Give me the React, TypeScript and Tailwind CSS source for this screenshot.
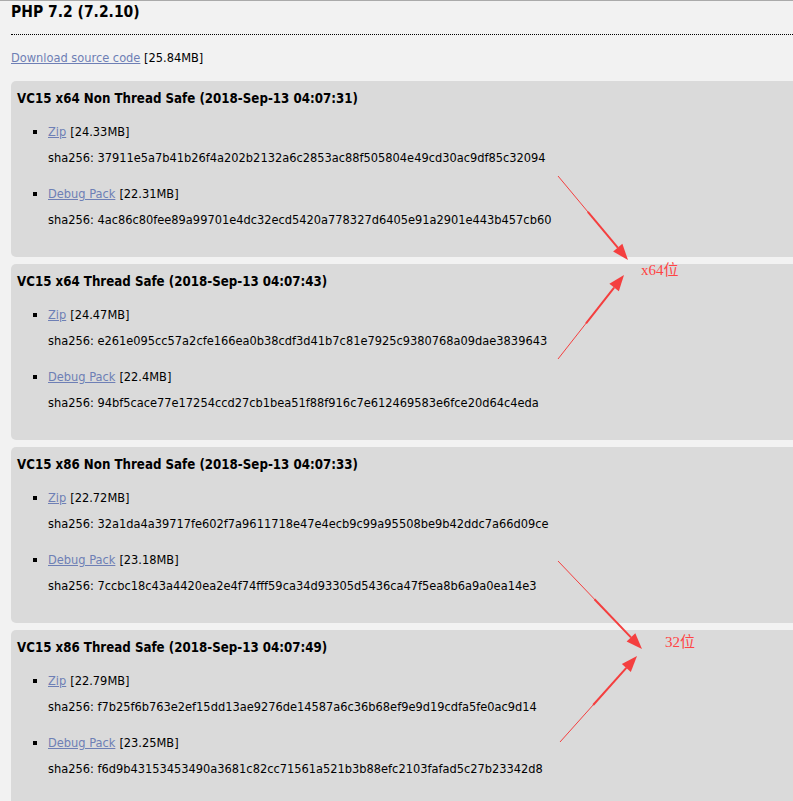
const builds = [
  {
    title: "VC15 x64 Non Thread Safe (2018-Sep-13 04:07:31)",
    zip: "24.33MB",
    zipSha: "37911e5a7b41b26f4a202b2132a6c2853ac88f505804e49cd30ac9df85c32094",
    debug: "22.31MB",
    debugSha: "4ac86c80fee89a99701e4dc32ecd5420a778327d6405e91a2901e443b457cb60",
  },
  {
    title: "VC15 x64 Thread Safe (2018-Sep-13 04:07:43)",
    zip: "24.47MB",
    zipSha: "e261e095cc57a2cfe166ea0b38cdf3d41b7c81e7925c9380768a09dae3839643",
    debug: "22.4MB",
    debugSha: "94bf5cace77e17254ccd27cb1bea51f88f916c7e612469583e6fce20d64c4eda",
  },
  {
    title: "VC15 x86 Non Thread Safe (2018-Sep-13 04:07:33)",
    zip: "22.72MB",
    zipSha: "32a1da4a39717fe602f7a9611718e47e4ecb9c99a95508be9b42ddc7a66d09ce",
    debug: "23.18MB",
    debugSha: "7ccbc18c43a4420ea2e4f74fff59ca34d93305d5436ca47f5ea8b6a9a0ea14e3",
  },
  {
    title: "VC15 x86 Thread Safe (2018-Sep-13 04:07:49)",
    zip: "22.79MB",
    zipSha: "f7b25f6b763e2ef15dd13ae9276de14587a6c36b68ef9e9d19cdfa5fe0ac9d14",
    debug: "23.25MB",
    debugSha: "f6d9b43153453490a3681c82cc71561a521b3b88efc2103fafad5c27b23342d8",
  },
];

const Item = ({ label, size, sha, first }: { label: string; size: string; sha: string; first?: boolean }) => (
  <li className={first ? "mt-[17px]" : "mt-[20px]"}>
    <div className="flex items-center h-4">
      <span className="w-[4px] h-[4px] bg-black ml-[16px] mr-[11px]" />
      <a className="text-[#6e7fb5] underline">{label}</a>
      <span className="ml-1">[{size}]</span>
    </div>
    <div className="h-4 leading-4 mt-[10px] pl-[31px]">sha256: {sha}</div>
  </li>
);

const Arrow = ({ x1, y1, x2, y2 }: { x1: number; y1: number; x2: number; y2: number }) => {
  const a = Math.atan2(y2 - y1, x2 - x1);
  const len = 16;
  const w = 6;
  const bx = x2 - len * Math.cos(a);
  const by = y2 - len * Math.sin(a);
  const px = -Math.sin(a) * w;
  const py = Math.cos(a) * w;
  return (
    <g>
      <line x1={x1} y1={y1} x2={bx} y2={by} stroke="#f43f3f" strokeWidth={1} />
      <line x1={x1 + (bx - x1) * 0.5} y1={y1 + (by - y1) * 0.5} x2={bx} y2={by} stroke="#f43f3f" strokeWidth={2} />
      <polygon points={`${x2},${y2} ${bx + px},${by + py} ${bx - px},${by - py}`} fill="#f43f3f" />
    </g>
  );
};

export default function App() {
  return (
    <div
      className="relative w-[793px] h-[801px] overflow-hidden bg-[#f2f2f2] border-t border-[#aaaaaa] text-[12.7px] text-black"
      style={{ fontFamily: '"DejaVu Sans Condensed", "DejaVu Sans", sans-serif' }}
    >
      <div className="pl-[11px]">
        <h1 className="font-bold text-[15.5px] leading-5 mt-[1px]">PHP 7.2 (7.2.10)</h1>
        <div className="mt-[12px] border-t border-dotted border-black" />
        <p className="mt-[15px] leading-4">
          <a className="text-[#6e7fb5] underline">Download source code</a> [25.84MB]
        </p>
        <div className="mt-[15px] flex flex-col gap-[7px]">
          {builds.map((b) => (
            <div key={b.title} className="bg-[#dadada] rounded-l-[5px] w-[800px] h-[176px] pt-[10px] pl-[6px]">
              <h3 className="font-bold leading-4 text-[13.2px]">{b.title}</h3>
              <ul>
                <Item label="Zip" size={b.zip} sha={b.zipSha} first />
                <Item label="Debug Pack" size={b.debug} sha={b.debugSha} />
              </ul>
            </div>
          ))}
        </div>
      </div>

      <svg className="absolute left-0 top-0 pointer-events-none" width="793" height="801">
        <Arrow x1={558} y1={175} x2={628} y2={259} />
        <Arrow x1={558} y1={358} x2={624} y2={274} />
        <Arrow x1={558} y1={560} x2={642} y2={648} />
        <Arrow x1={560} y1={741} x2={637} y2={655} />
      </svg>
      <span
        className="absolute left-[641px] top-[261px] text-[15px] leading-4 text-[#f44]"
        style={{ fontFamily: '"Liberation Serif", "Noto Sans CJK SC", serif' }}
      >
        x64位
      </span>
      <span
        className="absolute left-[665px] top-[633px] text-[15px] leading-4 text-[#f44]"
        style={{ fontFamily: '"Liberation Serif", "Noto Sans CJK SC", serif' }}
      >
        32位
      </span>
    </div>
  );
}
